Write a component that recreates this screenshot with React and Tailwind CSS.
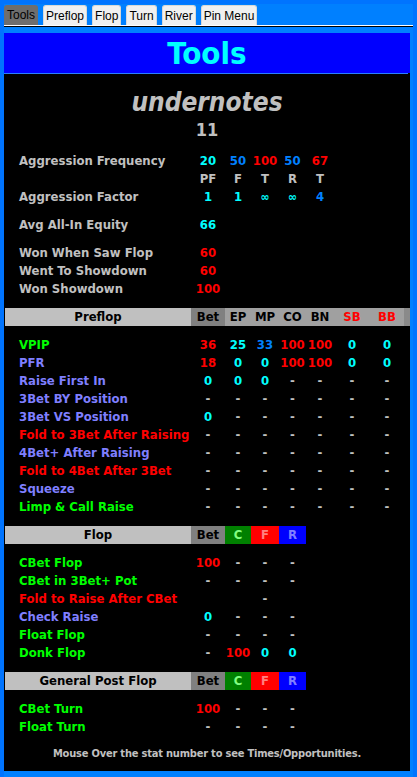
import React from 'react';

const F = { fontFamily: '"DejaVu Sans Condensed", "DejaVu Sans", sans-serif' };
const TAB_FONT = { fontFamily: '"Liberation Sans", Arial, sans-serif' };

// màu dùng chung
const C = {
  g: 'text-[#c0c0c0]',
  cy: 'text-[#00ffff]',
  bl: 'text-[#0080ff]',
  rd: 'text-[#ff0000]',
  gr: 'text-[#00ff00]',
  pw: 'text-[#7f7fff]',
};

const COLS = ['w-[34px]', 'w-[26px]', 'w-[28px]', 'w-[27px]', 'w-[28px]', 'w-[36px]', 'w-[34px]'];

function Row({ label, color, cells = [] }) {
  return (
    <div className="flex h-[18px] items-center text-[13px] font-bold leading-[18px]">
      <div className={`w-[187px] shrink-0 pl-[15px] whitespace-nowrap ${color}`}>{label}</div>
      {cells.map((c, i) => {
        const [v, col] = Array.isArray(c) ? c : [c, C.g];
        return (
          <div key={i} className={`${COLS[i]} shrink-0 text-center whitespace-nowrap ${v === '∞' ? 'text-[12px]' : ''} ${col}`}>
            {v}
          </div>
        );
      })}
    </div>
  );
}

function Header({ title, cols }) {
  return (
    <div className="ml-[1px] flex h-[18px] items-center text-[13px] font-bold leading-[18px] text-black">
      <div className="h-full w-[186px] shrink-0 bg-[#c0c0c0] text-center">{title}</div>
      {cols.map(([t, bg, tc], i) => (
        <div key={i} className={`h-full ${COLS[i]} shrink-0 text-center ${bg} ${tc}`}>{t}</div>
      ))}
    </div>
  );
}

const dash = ['-', C.g];
const postCols = [
  ['Bet', 'bg-[#808080]', 'text-black'],
  ['C', 'bg-[#008000]', 'text-[#80ff80]'],
  ['F', 'bg-[#ff0000]', 'text-[#ff8080]'],
  ['R', 'bg-[#0000ff]', 'text-[#8080ff]'],
];

export default function App() {
  const tabs = ['Tools', 'Preflop', 'Flop', 'Turn', 'River', 'Pin Menu'];

  return (
    <div className="flex h-[777px] w-[417px] flex-col bg-[#0074ff] p-[4px] pb-0" style={F}>
      <div className="flex flex-1 flex-col bg-[#0080ff]">
        {/* tabs */}
        <div className="flex h-[21px] items-end gap-[5px] pt-[1px]" style={TAB_FONT}>
          {tabs.map((t, i) => (
            <div
              key={t}
              className={`flex h-[20px] items-center rounded-t-[3px] text-[12px] leading-none whitespace-nowrap text-black ${
                i === 0 ? 'bg-[#6e6e6e] px-[3px]' : 'border border-b-0 border-[#d8d8d8] bg-[#f0f0f0] px-[2px]'
              }`}
            >
              {t}
            </div>
          ))}
        </div>
        <div className="h-[1px] bg-white" />
        <div className="h-[1px] bg-black" />

        {/* panel */}
        <div className="mr-[3px] mt-[6px] mb-[6px] flex flex-1 flex-col bg-black">
          <div className="h-[40px] bg-[#0000ff] text-center text-[31px] font-bold leading-[40px] text-[#00ffff]">Tools</div>
          <div className="mr-[2px] h-[1px] bg-[#2a7fff]" />

          <div className="pt-[14px]">
            <div className="h-[28px] text-center text-[26px] font-bold italic leading-[28px] text-[#c0c0c0]">undernotes</div>
            <div className="mt-[3px] h-[22px] text-center text-[18px] font-bold leading-[22px] text-[#c0c0c0]">11</div>

            <div className="mt-[11px]">
              <Row label="Aggression Frequency" color={C.g} cells={[['20', C.cy], ['50', C.bl], ['100', C.rd], ['50', C.bl], ['67', C.rd]]} />
              <Row label="" color={C.g} cells={['PF', 'F', 'T', 'R', 'T']} />
              <Row label="Aggression Factor" color={C.g} cells={[['1', C.cy], ['1', C.cy], ['∞', C.cy], ['∞', C.cy], ['4', C.bl]]} />
            </div>

            <div className="mt-[10px]">
              <Row label="Avg All-In Equity" color={C.g} cells={[['66', C.cy]]} />
            </div>

            <div className="mt-[10px]">
              <Row label="Won When Saw Flop" color={C.g} cells={[['60', C.rd]]} />
              <Row label="Went To Showdown" color={C.g} cells={[['60', C.rd]]} />
              <Row label="Won Showdown" color={C.g} cells={[['100', C.rd]]} />
            </div>

            <div className="mt-[10px] flex">
              <Header
                title="Preflop"
                cols={[
                  ['Bet', 'bg-[#808080]', 'text-black'],
                  ['EP', 'bg-[#a0a0a0]', 'text-black'],
                  ['MP', 'bg-[#a0a0a0]', 'text-black'],
                  ['CO', 'bg-[#a0a0a0]', 'text-black'],
                  ['BN', 'bg-[#a0a0a0]', 'text-black'],
                  ['SB', 'bg-[#a0a0a0]', 'text-[#ff0000]'],
                  ['BB', 'bg-[#a0a0a0]', 'text-[#ff0000]'],
                ]}
              />
              <div className="h-[18px] flex-1 bg-[#8a8a8a]" />
            </div>

            <div className="mt-[10px]">
              <Row label="VPIP" color={C.gr} cells={[['36', C.rd], ['25', C.cy], ['33', C.bl], ['100', C.rd], ['100', C.rd], ['0', C.cy], ['0', C.cy]]} />
              <Row label="PFR" color={C.pw} cells={[['18', C.rd], ['0', C.cy], ['0', C.cy], ['100', C.rd], ['100', C.rd], ['0', C.cy], ['0', C.cy]]} />
              <Row label="Raise First In" color={C.pw} cells={[['0', C.cy], ['0', C.cy], ['0', C.cy], dash, dash, dash, dash]} />
              <Row label="3Bet BY Position" color={C.pw} cells={[dash, dash, dash, dash, dash, dash, dash]} />
              <Row label="3Bet VS Position" color={C.pw} cells={[['0', C.cy], dash, dash, dash, dash, dash, dash]} />
              <Row label="Fold to 3Bet After Raising" color={C.rd} cells={[dash, dash, dash, dash, dash, dash, dash]} />
              <Row label="4Bet+ After Raising" color={C.pw} cells={[dash, dash, dash, dash, dash, dash, dash]} />
              <Row label="Fold to 4Bet After 3Bet" color={C.rd} cells={[dash, dash, dash, dash, dash, dash, dash]} />
              <Row label="Squeeze" color={C.pw} cells={[dash, dash, dash, dash, dash, dash, dash]} />
              <Row label="Limp & Call Raise" color={C.gr} cells={[dash, dash, dash, dash, dash, dash, dash]} />
            </div>

            <div className="mt-[10px]">
              <Header title="Flop" cols={postCols} />
            </div>

            <div className="mt-[10px]">
              <Row label="CBet Flop" color={C.gr} cells={[['100', C.rd], dash, dash, dash]} />
              <Row label="CBet in 3Bet+ Pot" color={C.gr} cells={[dash, dash, dash, dash]} />
              <Row label="Fold to Raise After CBet" color={C.rd} cells={[['', C.g], ['', C.g], dash]} />
              <Row label="Check Raise" color={C.pw} cells={[['0', C.cy], dash, dash, dash]} />
              <Row label="Float Flop" color={C.gr} cells={[dash, dash, dash, dash]} />
              <Row label="Donk Flop" color={C.gr} cells={[dash, ['100', C.rd], ['0', C.cy], ['0', C.cy]]} />
            </div>

            <div className="mt-[10px]">
              <Header title="General Post Flop" cols={postCols} />
            </div>

            <div className="mt-[10px]">
              <Row label="CBet Turn" color={C.gr} cells={[['100', C.rd], dash, dash, dash]} />
              <Row label="Float Turn" color={C.gr} cells={[dash, dash, dash, dash]} />
            </div>

            <div className="mt-[10px] h-[16px] text-center text-[11px] font-bold leading-[16px] tracking-[-0.2px] text-[#c0c0c0]">
              Mouse Over the stat number to see Times/Opportunities.
            </div>
          </div>
        </div>
      </div>
    </div>
  );
}
